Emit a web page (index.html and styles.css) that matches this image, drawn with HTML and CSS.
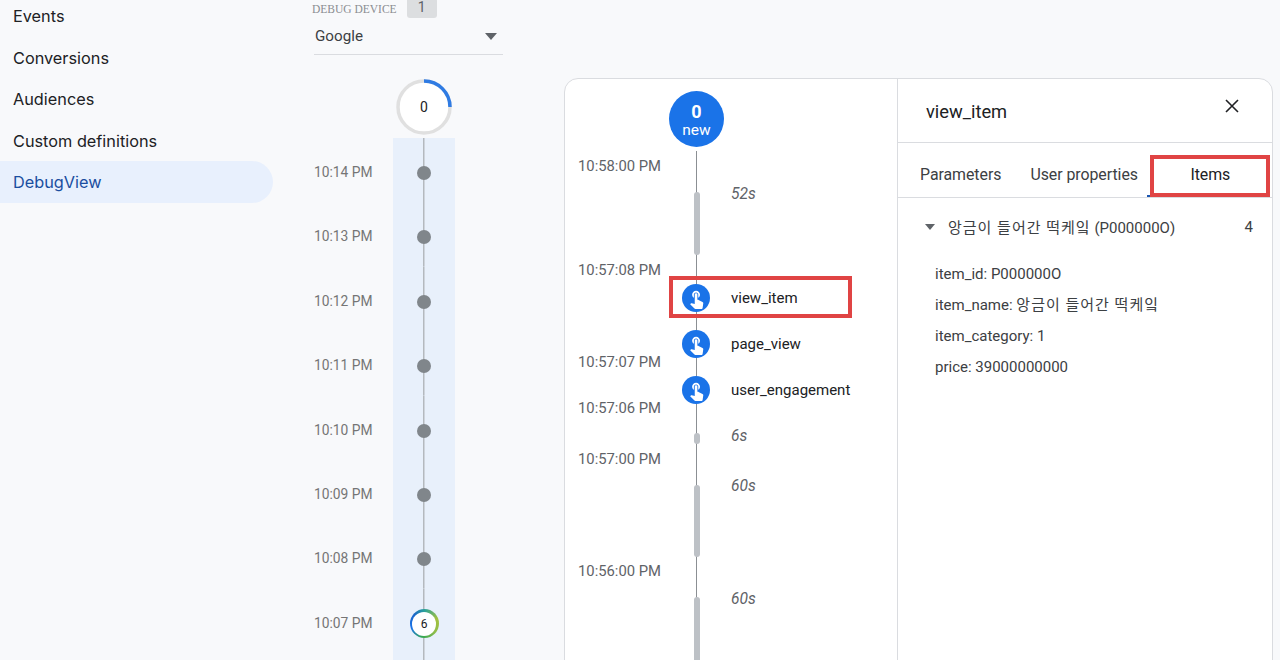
FILE: index.html
```html
<!DOCTYPE html>
<html lang="en">
<head>
<meta charset="utf-8">
<title>DebugView</title>
<link rel="stylesheet" href="styles.css">
</head>
<body>
<svg class="defs" width="0" height="0" aria-hidden="true">
  <symbol id="touch" viewBox="0 0 24 24"><path d="M9 11.24V7.5C9 6.12 10.12 5 11.5 5S14 6.12 14 7.5v3.74c1.21-.81 2-2.18 2-3.74C16 5.01 13.99 3 11.5 3S7 5.01 7 7.5c0 1.56.79 2.93 2 3.74zm9.84 4.63l-4.54-2.26c-.17-.07-.35-.11-.54-.11H13v-6c0-.83-.67-1.5-1.5-1.5S10 6.67 10 7.5v10.74l-3.43-.72c-.08-.01-.15-.03-.24-.03-.31 0-.59.13-.79.33l-.79.8 4.94 4.94c.27.27.65.44 1.06.44h6.79c.75 0 1.33-.55 1.44-1.28l.75-5.27c.01-.07.02-.14.02-.2 0-.62-.38-1.16-.91-1.38z" fill="currentColor"/></symbol>
</svg>
<div class="page">
  <nav class="sidebar">
    <a class="nav-item">Events</a>
    <a class="nav-item">Conversions</a>
    <a class="nav-item">Audiences</a>
    <a class="nav-item">Custom definitions</a>
    <a class="nav-item active">DebugView</a>
  </nav>

  <section class="device">
    <div class="device-label"><span>DEBUG DEVICE</span><span class="badge">1</span></div>
    <div class="select"><span>Google</span><span class="caret"></span></div>
    <div class="ring">
      <svg viewBox="0 0 56 56" width="56" height="56">
        <circle cx="28" cy="28" r="26" fill="#fff" stroke="#e0e0e0" stroke-width="3.5"/>
        <path d="M28 2A26 26 0 0 1 54 28" fill="none" stroke="#2f7be3" stroke-width="3.5"/>
      </svg>
      <span class="ring-num">0</span>
    </div>
    <div class="minutes">
      <div class="minute"><span class="m-time">10:14 PM</span><span class="m-cell"><i class="dot"></i></span></div>
      <div class="minute"><span class="m-time">10:13 PM</span><span class="m-cell"><i class="dot"></i></span></div>
      <div class="minute"><span class="m-time">10:12 PM</span><span class="m-cell"><i class="dot"></i></span></div>
      <div class="minute"><span class="m-time">10:11 PM</span><span class="m-cell"><i class="dot"></i></span></div>
      <div class="minute"><span class="m-time">10:10 PM</span><span class="m-cell"><i class="dot"></i></span></div>
      <div class="minute"><span class="m-time">10:09 PM</span><span class="m-cell"><i class="dot"></i></span></div>
      <div class="minute"><span class="m-time">10:08 PM</span><span class="m-cell"><i class="dot"></i></span></div>
      <div class="minute"><span class="m-time">10:07 PM</span><span class="m-cell"><span class="count"><b>6</b></span></span></div>
    </div>
  </section>

  <section class="card">
    <div class="stream">
      <div class="new-badge">0<br>new</div>
      <div class="axis"></div>
      <span class="stamp t1">10:58:00 PM</span>
      <span class="stamp t2">10:57:08 PM</span>
      <span class="stamp t3">10:57:07 PM</span>
      <span class="stamp t4">10:57:06 PM</span>
      <span class="stamp t5">10:57:00 PM</span>
      <span class="stamp t6">10:56:00 PM</span>
      <i class="gap g1"></i><i class="gap g2"></i><i class="gap g3"></i><i class="gap g4"></i>
      <em class="dur d1">52s</em><em class="dur d2">6s</em><em class="dur d3">60s</em><em class="dur d4">60s</em>
      <div class="event e1"><span class="ev-icon"><svg width="21" height="21"><use href="#touch"/></svg></span><span>view_item</span></div>
      <div class="event e2"><span class="ev-icon"><svg width="21" height="21"><use href="#touch"/></svg></span><span>page_view</span></div>
      <div class="event e3"><span class="ev-icon"><svg width="21" height="21"><use href="#touch"/></svg></span><span>user_engagement</span></div>
      <div class="mark mark-event"></div>
    </div>
    <div class="detail">
      <header class="detail-head">
        <h2>view_item</h2>
        <svg class="close" viewBox="0 0 14 14" width="14" height="14"><path d="M1 1l12 12M13 1L1 13" stroke="#202124" stroke-width="1.6" fill="none"/></svg>
      </header>
      <div class="tabs">
        <span class="tab">Parameters</span>
        <span class="tab">User properties</span>
        <span class="tab selected">Items</span>
        <div class="mark mark-tab"></div>
      </div>
      <div class="item-row">
        <span class="tri"></span>
        <span class="item-name"><span class="ko">앙금이 들어간 떡케잌</span> (P000000O)</span>
        <span class="item-count">4</span>
      </div>
      <ul class="params">
        <li>item_id: P000000O</li>
        <li>item_name: <span class="ko">앙금이 들어간 떡케잌</span></li>
        <li>item_category: 1</li>
        <li>price: 39000000000</li>
      </ul>
    </div>
  </section>
</div>
</body>
</html>
```
FILE: styles.css
```css
* { box-sizing: border-box; }
html, body { margin: 0; height: 660px; overflow: hidden; }
body {
  background: #f8f9fb;
  color: #202124;
  font-family: Roboto, "Noto Sans CJK KR", sans-serif;
  font-size: 14px;
}
.defs { position: absolute; }
.page { display: flex; height: 660px; align-items: flex-start; overflow: hidden; }
.ko { letter-spacing: 1px; }

/* sidebar */
.sidebar { width: 273px; margin-top: -4px; flex: none; display: flex; flex-direction: column; }
.nav-item {
  height: 41.5px;
  line-height: 41.5px;
  padding-left: 13px;
  font-family: Inter, sans-serif;
  font-size: 16.3px;
  color: #202124;
  border-radius: 0 21px 21px 0;
}
.nav-item.active { height: 42px; margin-top: -1.5px; line-height: 43px; background: #e8f0fd; color: #1a4ea0; }

/* device column */
.device { width: 189px; margin-left: 41px; flex: none; }
.device-label { display: flex; align-items: center; height: 18px; color: #8a8d91; font: 11.5px "Liberation Serif", serif; }
.device-label span:first-child { margin-left: -2px; }
.badge {
  width: 30px; height: 20px; margin: -3px 0 0 10px;
  background: #dcdee0; border-radius: 3px;
  text-align: center;
  font: 14px/19px Roboto, sans-serif; color: #5f6368;
}
.select {
  display: flex; justify-content: space-between; align-items: center;
  height: 36.5px; padding: 1px 6px 0 1px;
  border-bottom: 1px solid #dadce0;
  font-size: 15.2px; color: #3c4043;
}
.caret { width: 0; height: 0; border: 6px solid transparent; border-top: 7px solid #5f6368; border-bottom: 0; }
.ring { position: relative; width: 56px; height: 56px; margin: 24.5px 0 0 82px; }
.ring svg { display: block; }
.ring-num { position: absolute; inset: 0; display: flex; align-items: center; justify-content: center; font-size: 14px; color: #202124; }
.minutes { display: flex; flex-direction: column; margin-top: 3px; }
.minute { display: flex; height: 64.4px; }
.m-time { width: 79px; margin-top: 24px; color: #757575; font-size: 13.8px; line-height: 20px; flex: none; }
.m-cell {
  width: 62px; flex: none; display: flex; justify-content: center; padding-top: 28px;
  background: linear-gradient(#b4b9be, #b4b9be) center / 1.5px 100% no-repeat, #e8f0fb;
}
.minute:last-child { height: 120px; }
.dot { width: 14px; height: 14px; border-radius: 50%; background: #80868b; }
.count {
  width: 29px; height: 29px; margin-top: -7.5px; padding: 2.5px; border-radius: 50%;
  background: conic-gradient(#2aa198 0deg, #a3c13f 70deg, #8fbc4a 130deg, #34a853 190deg, #1a73e8 250deg, #1a66c9 310deg, #2aa198 360deg);
}
.count b {
  display: flex; align-items: center; justify-content: center;
  width: 100%; height: 100%; border-radius: 50%; background: #fff;
  font-weight: 400; font-size: 12px; color: #202124;
}

/* card */
.card {
  margin: 78px 0 0 61px; width: 709px; height: 620px; flex: none;
  display: grid; grid-template-columns: 333px 1fr;
  background: #fff; border: 1px solid #dadce0; border-radius: 14px;
}
.stream { position: relative; border-right: 1px solid #dadce0; }
.new-badge {
  position: absolute; left: 104px; top: 12px; width: 55px; height: 56px; padding-top: 12px; border-radius: 50%;
  background: #1a73e8; color: #fff; text-align: center;
  font-size: 15.5px; font-weight: 400; line-height: 18px;
}
.new-badge::first-line { font-size: 18px; font-weight: 700; }
.axis { position: absolute; left: 130.5px; top: 72px; bottom: 0; width: 1.5px; background: #8b8f93; }
.stamp { position: absolute; left: 13px; color: #5f6368; font-size: 14.8px; line-height: 20px; }
.t1 { top: 77px; } .t2 { top: 181px; } .t3 { top: 273px; } .t4 { top: 319px; } .t5 { top: 370px; } .t6 { top: 482px; }
.gap { position: absolute; left: 128.5px; width: 6px; background: #bdc1c6; border-radius: 3px; }
.g1 { top: 113px; height: 63px; } .g2 { top: 354px; height: 11px; } .g3 { top: 406px; height: 72px; } .g4 { top: 518px; height: 90px; }
.dur { position: absolute; left: 166px; color: #5f6368; font-size: 15.6px; line-height: 20px; }
.d1 { top: 105px; } .d2 { top: 347px; } .d3 { top: 397px; } .d4 { top: 510px; }
.event { position: absolute; left: 117px; display: flex; align-items: center; gap: 21px; font-size: 15px; color: #202124; height: 28px; }
.e1 { top: 205px; } .e2 { top: 251px; } .e3 { top: 297px; }
.ev-icon { width: 28px; height: 28px; border-radius: 50%; background: #1a73e8; color: #fff; display: flex; align-items: center; justify-content: center; }
.mark { position: absolute; border: 4px solid #e04444; pointer-events: none; z-index: 1; }
.mark-event { left: 104px; top: 197px; width: 183px; height: 42px; }

/* detail */
.detail { display: flex; flex-direction: column; }
.detail-head { display: flex; justify-content: space-between; align-items: center; height: 64px; padding: 0 33px 0 28px; border-bottom: 1px solid #dadce0; }
.detail-head h2 { margin: 1px 0 0; font-size: 18.3px; font-weight: 400; color: #202124; }
.close { margin-top: -9px; }
.tabs { position: relative; display: flex; height: 55px; padding: 9px 0 0 22px; border-bottom: 1px solid #dadce0; align-items: center; color: #3c4043; font-size: 15.9px; letter-spacing: -.05px; }
.tab { margin-right: 29px; }
.tab.selected { margin-left: 23.5px; color: #202124; }
.mark-tab { left: 252px; top: 12px; width: 120px; height: 42px; }
.tabs::after { content: ""; position: absolute; left: 249px; right: 2px; bottom: 0; height: 2px; background: #1a56b0; }
.item-row { display: flex; align-items: center; height: 57px; padding: 0 19px 0 27px; font-size: 15px; color: #3c4043; }
.tri { width: 0; height: 0; border: 5px solid transparent; border-top: 6px solid #5f6368; border-bottom: 0; margin-right: 13px; }
.item-name { flex: 1; }
.params { list-style: none; margin: 9px 0 0; padding: 0 0 0 37px; color: #3c4043; font-size: 15px; }
.params li { height: 31px; line-height: 20px; }
```
